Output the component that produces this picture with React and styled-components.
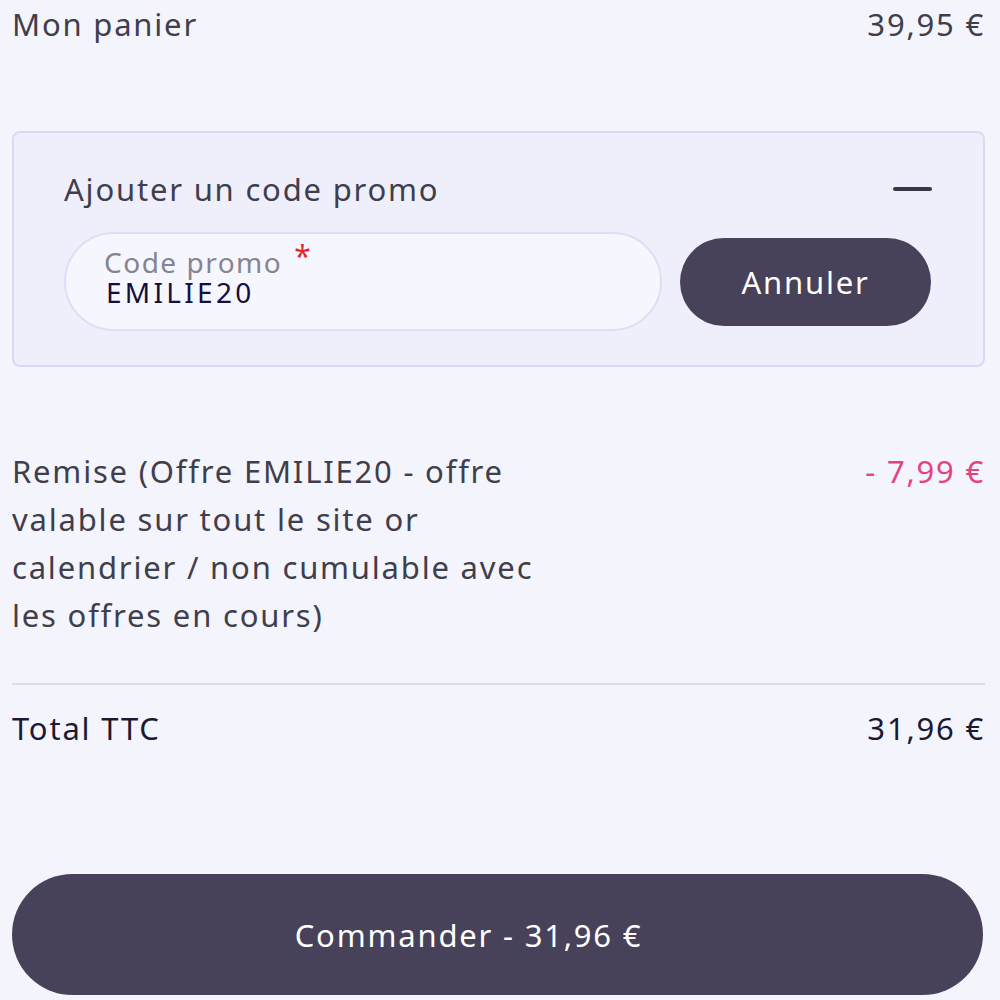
import styled, { createGlobalStyle } from 'styled-components';

const GlobalStyle = createGlobalStyle`
  body {
    margin: 0;
    background: #f4f4fd;
    font-family: "Noto Sans", "Liberation Sans", sans-serif;
    letter-spacing: 1.8px;
  }
`;

const Page = styled.div`
  padding: 0 15px 0 12px;
  display: flex;
  flex-direction: column;
  height: 1000px;
  box-sizing: border-box;
`;

const Row = styled.div`
  display: flex;
  justify-content: space-between;
  align-items: flex-start;
  font-size: 31px;
  line-height: 48px;
  color: ${p => p.dark ? '#1c1a33' : '#403e4b'};
  margin-top: ${p => p.top || 0}px;
`;

const Price = styled.span`
  color: ${p => p.pink ? '#e2457d' : 'inherit'};
  white-space: nowrap;
`;

const Label = styled.span`
  max-width: ${p => p.wrap ? '548px' : 'none'};
`;

const PromoPanel = styled.section`
  margin-top: 83px;
  margin-right: 0;
  background: #efeffc;
  border: 2px solid #d9d9f6;
  border-radius: 8px;
  padding: 32px 51px 34px 50px;
  display: flex;
  flex-direction: column;
  gap: 19px;
`;

const PanelHeader = styled.div`
  display: flex;
  justify-content: space-between;
  align-items: center;
  height: 48px;
  font-size: 31px;
  color: #403e4b;
`;

const Minus = styled.span`
  width: 39px;
  height: 4px;
  border-radius: 2px;
  background: #3a3848;
`;

const PromoRow = styled.div`
  display: flex;
  align-items: center;
  gap: 18px;
`;

const Field = styled.div`
  width: 598px;
  height: 99px;
  box-sizing: border-box;
  border: 2px solid #dedef4;
  border-radius: 50px;
  background: #f6f6fe;
  padding: 7px 38px 0;
  display: flex;
  flex-direction: column;
`;

const FieldLabel = styled.span`
  font-size: 28px;
  line-height: 30px;
  letter-spacing: 1.5px;
  color: #85848f;
`;

const Star = styled.span`
  color: #e0282e;
  margin-left: 12px;
  font-size: 30px;
  vertical-align: 6px;
`;

const FieldValue = styled.span`
  font-size: 28px;
  line-height: 30px;
  letter-spacing: 3.3px;
  color: #14103a;
  padding-left: 2px;
`;

const PillButton = styled.button`
  border: none;
  background: #47425a;
  color: #ffffff;
  font-family: inherit;
  letter-spacing: inherit;
  font-size: 31px;
  border-radius: 999px;
  width: ${p => p.big ? '100%' : '251px'};
  height: ${p => p.big ? 121 : 88}px;
  padding: ${p => p.big ? '0 58px 0 0' : '0'};
  cursor: pointer;
`;

const Divider = styled.hr`
  border: none;
  height: 2px;
  background: #dcdcef;
  margin: 44px 0 0;
`;

const Footer = styled.div`
  margin-top: 122px;
  margin-right: 2px;
`;

export default function App() {
  return (
    <>
      <GlobalStyle />
      <Page>
        <Row top={0}>
          <Label>Mon panier</Label>
          <Price>39,95 €</Price>
        </Row>
        <PromoPanel>
          <PanelHeader>
            <span>Ajouter un code promo</span>
            <Minus />
          </PanelHeader>
          <PromoRow>
            <Field>
              <FieldLabel>Code promo<Star>*</Star></FieldLabel>
              <FieldValue>EMILIE20</FieldValue>
            </Field>
            <PillButton>Annuler</PillButton>
          </PromoRow>
        </PromoPanel>
        <Row top={80}>
          <Label wrap>Remise (Offre EMILIE20 - offre valable sur tout le site or calendrier / non cumulable avec les offres en cours)</Label>
          <Price pink>- 7,99 €</Price>
        </Row>
        <Divider />
        <Row top={19} dark>
          <Label>Total TTC</Label>
          <Price>31,96 €</Price>
        </Row>
        <Footer>
          <PillButton big>Commander - 31,96 €</PillButton>
        </Footer>
      </Page>
    </>
  );
}
